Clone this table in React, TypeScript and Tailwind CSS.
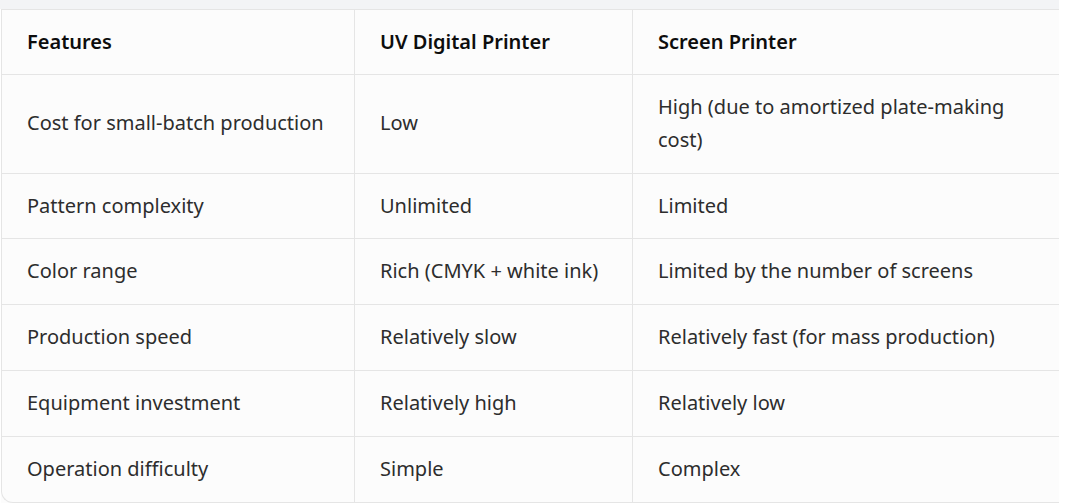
const rows: [string, string, string][] = [
  ["Cost for small-batch production", "Low", "High (due to amortized plate-making cost)"],
  ["Pattern complexity", "Unlimited", "Limited"],
  ["Color range", "Rich (CMYK + white ink)", "Limited by the number of screens"],
  ["Production speed", "Relatively slow", "Relatively fast (for mass production)"],
  ["Equipment investment", "Relatively high", "Relatively low"],
  ["Operation difficulty", "Simple", "Complex"],
];

export default function App() {
  return (
    <div className="w-[1075px] h-[504px] bg-white font-['Noto_Sans',sans-serif]">
      <div className="w-[1059px] overflow-hidden">
        {/* strip above the table */}
        <div className="h-[9px] bg-[#f3f4f6]" />
        <div className="w-[1100px] ml-px">
          <table className="table-fixed border-separate border-spacing-0 bg-[#fcfcfc] text-[20px] leading-[32.8px]">
            <colgroup>
              <col className="w-[353px]" />
              <col className="w-[278px]" />
              <col className="w-[440px]" />
            </colgroup>
            <thead>
              <tr>
                <th className="h-[65px] px-[25px] text-left font-semibold text-[#0d0d0d] border-t border-l border-[#e5e5e5]">Features</th>
                <th className="h-[65px] px-[25px] text-left font-semibold text-[#0d0d0d] border-t border-l border-[#e5e5e5]">UV Digital Printer</th>
                <th className="h-[65px] px-[25px] text-left font-semibold text-[#0d0d0d] border-t border-l border-[#e5e5e5]">Screen Printer</th>
              </tr>
            </thead>
            <tbody>
              {rows.map((r, i) => {
                const last = i === rows.length - 1;
                return (
                  <tr key={r[0]}>
                    <td className={last
                      ? "px-[25px] py-4 align-middle text-[#2d2d2d] border-t border-l border-b border-[#e5e5e5] rounded-bl-xl"
                      : "px-[25px] py-4 align-middle text-[#2d2d2d] border-t border-l border-[#e5e5e5]"}>{r[0]}</td>
                    <td className={last
                      ? "px-[25px] py-4 align-middle text-[#2d2d2d] border-t border-l border-b border-[#e5e5e5]"
                      : "px-[25px] py-4 align-middle text-[#2d2d2d] border-t border-l border-[#e5e5e5]"}>{r[1]}</td>
                    <td className={last
                      ? "px-[25px] py-4 pr-[40px] align-middle text-[#2d2d2d] border-t border-l border-b border-[#e5e5e5]"
                      : "px-[25px] py-4 pr-[40px] align-middle text-[#2d2d2d] border-t border-l border-[#e5e5e5]"}>{r[2]}</td>
                  </tr>
                );
              })}
            </tbody>
          </table>
        </div>
      </div>
    </div>
  );
}
